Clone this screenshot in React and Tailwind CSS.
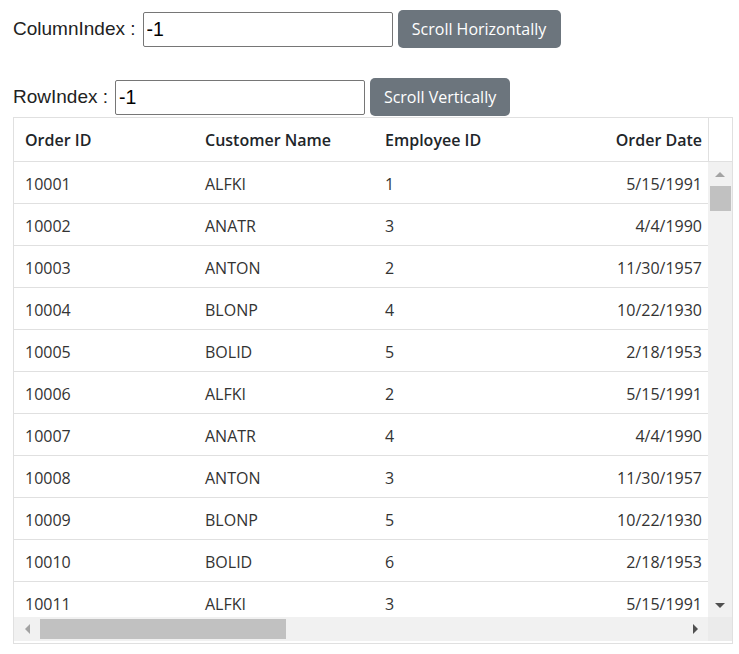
import React from 'react';

const orders = [
  ['10001', 'ALFKI', '1', '5/15/1991'],
  ['10002', 'ANATR', '3', '4/4/1990'],
  ['10003', 'ANTON', '2', '11/30/1957'],
  ['10004', 'BLONP', '4', '10/22/1930'],
  ['10005', 'BOLID', '5', '2/18/1953'],
  ['10006', 'ALFKI', '2', '5/15/1991'],
  ['10007', 'ANATR', '4', '4/4/1990'],
  ['10008', 'ANTON', '3', '11/30/1957'],
  ['10009', 'BLONP', '5', '10/22/1930'],
  ['10010', 'BOLID', '6', '2/18/1953'],
  ['10011', 'ALFKI', '3', '5/15/1991'],
];

const gridFont = { fontFamily: '"Open Sans", "Noto Sans", sans-serif' };
const labelFont = { fontFamily: '"Liberation Sans", Arial, sans-serif' };

function Arrow({ dir, light }) {
  const color = light ? 'border-[#a3a3a3]' : 'border-[#505050]';
  if (dir === 'up') return <div className={`w-0 h-0 border-x-[5px] border-x-transparent border-b-[5px] ${color} border-t-0`} />;
  if (dir === 'down') return <div className={`w-0 h-0 border-x-[5px] border-x-transparent border-t-[5px] ${color} border-b-0`} />;
  if (dir === 'left') return <div className={`w-0 h-0 border-y-[5px] border-y-transparent border-r-[5px] ${color} border-l-0`} />;
  return <div className={`w-0 h-0 border-y-[5px] border-y-transparent border-l-[5px] ${color} border-r-0`} />;
}

function IndexRow({ label, buttonText, buttonWidth }) {
  return (
    <div className="flex items-center h-[38px]">
      <span className="text-[19px] text-[#222] mr-[7px]" style={labelFont}>{label}</span>
      <input
        defaultValue="-1"
        className="w-[250px] h-[35px] border border-[#767676] rounded-[2px] px-[3px] text-[19.5px] text-black outline-none"
        style={labelFont}
      />
      <button
        type="button"
        className={`${buttonWidth} ml-[5px] h-[38px] rounded-[5px] bg-[#6c757d] text-white text-[16px]`}
        style={gridFont}
      >
        {buttonText}
      </button>
    </div>
  );
}

export default function App() {
  return (
    <div className="bg-white w-[739px] h-[654px] pt-[10px] pl-[13px]">
      <IndexRow label="ColumnIndex :" buttonText="Scroll Horizontally" buttonWidth="w-[163px]" />
      <div className="mt-[30px]">
        <IndexRow label="RowIndex :" buttonText="Scroll Vertically" buttonWidth="w-[140px]" />
      </div>

      <div className="mt-[1px] w-[720px] h-[527px] border border-[#e0e0e0] flex flex-col text-[16px] text-[#212529]" style={gridFont}>
        {/* header */}
        <div className="flex h-[44px] border-b border-[#e0e0e0] font-semibold shrink-0">
          <div className="w-[694px] flex items-center">
            <div className="w-[180px] pl-[11px]">Order ID</div>
            <div className="w-[180px] pl-[11px]">Customer Name</div>
            <div className="w-[180px] pl-[11px]">Employee ID</div>
            <div className="flex-1 text-right pr-[6px]">Order Date</div>
          </div>
          <div className="w-[24px] border-l border-[#e0e0e0]" />
        </div>

        {/* body */}
        <div className="flex h-[455px] shrink-0">
          <div className="w-[694px] overflow-hidden">
            {orders.map((o) => (
              <div key={o[0]} className="flex items-center h-[42px] pt-[2px] border-b border-[#e0e0e0] text-[#333]">
                <div className="w-[180px] pl-[11px]">{o[0]}</div>
                <div className="w-[180px] pl-[11px]">{o[1]}</div>
                <div className="w-[180px] pl-[11px]">{o[2]}</div>
                <div className="flex-1 text-right pr-[6px]">{o[3]}</div>
              </div>
            ))}
          </div>
          <div className="w-[24px] bg-[#f1f1f1] flex flex-col items-center">
            <div className="h-[24px] flex items-center justify-center">
              <Arrow dir="up" light />
            </div>
            <div className="w-[21px] h-[25px] bg-[#c1c1c1]" />
            <div className="flex-1" />
            <div className="h-[24px] flex items-center justify-center">
              <Arrow dir="down" />
            </div>
          </div>
        </div>

        {/* horizontal scrollbar */}
        <div className="flex h-[24px] shrink-0">
          <div className="w-[694px] bg-[#f1f1f1] flex items-center">
            <div className="w-[26px] flex justify-center">
              <Arrow dir="left" light />
            </div>
            <div className="w-[246px] h-[20px] bg-[#c1c1c1]" />
            <div className="flex-1" />
            <div className="w-[26px] flex justify-center">
              <Arrow dir="right" />
            </div>
          </div>
          <div className="w-[24px] bg-[#ebebeb]" />
        </div>
      </div>
    </div>
  );
}
